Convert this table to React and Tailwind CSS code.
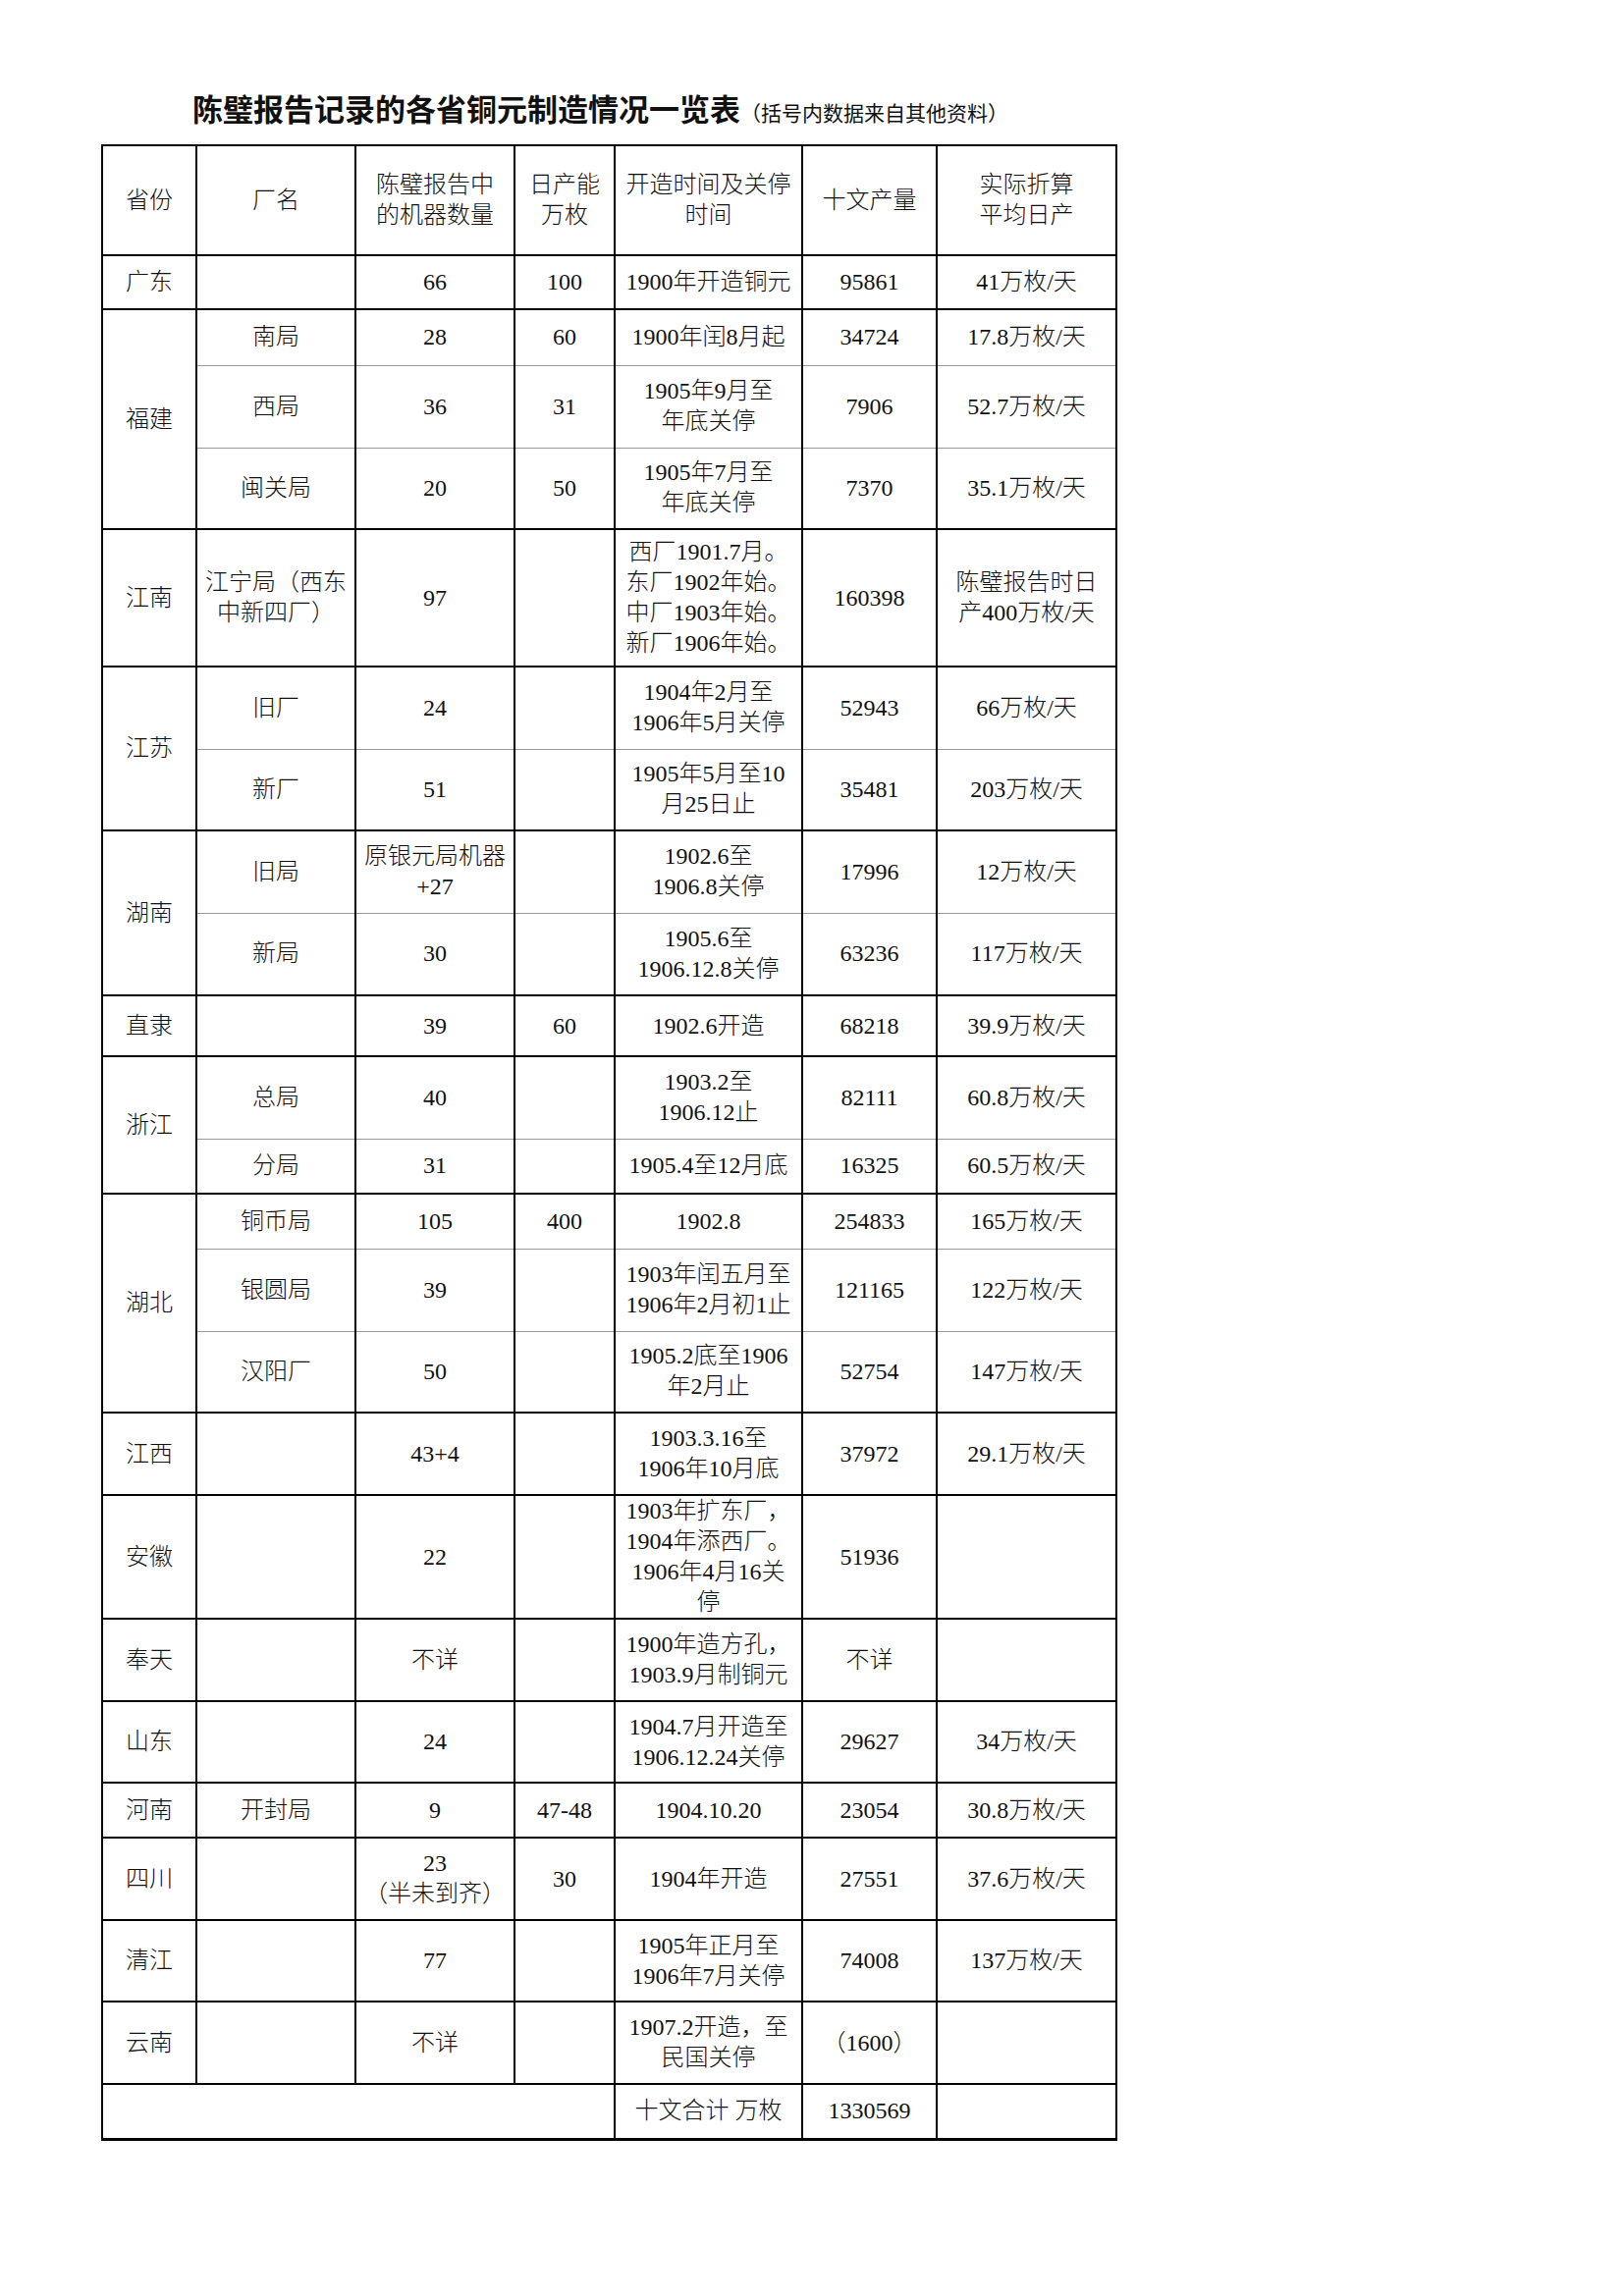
import React from "react";

const font = {
  fontFamily: '"Liberation Serif", "Noto Sans CJK SC", serif',
};

const header = ["省份", "厂名", "陈璧报告中\n的机器数量", "日产能\n万枚", "开造时间及关停\n时间", "十文产量", "实际折算\n平均日产"];

// each group: province, rows of [厂名, 机器, 日产能, 开造时间, 十文产量, 日产], row height
const groups = [
  { prov: "广东", rows: [{ h: 55, c: ["", "66", "100", "1900年开造铜元", "95861", "41万枚/天"] }] },
  {
    prov: "福建",
    rows: [
      { h: 57, c: ["南局", "28", "60", "1900年闰8月起", "34724", "17.8万枚/天"] },
      { h: 84, c: ["西局", "36", "31", "1905年9月至\n年底关停", "7906", "52.7万枚/天"] },
      { h: 83, c: ["闽关局", "20", "50", "1905年7月至\n年底关停", "7370", "35.1万枚/天"] },
    ],
  },
  {
    prov: "江南",
    rows: [
      {
        h: 140,
        c: [
          "江宁局（西东\n中新四厂）",
          "97",
          "",
          "西厂1901.7月。\n东厂1902年始。\n中厂1903年始。\n新厂1906年始。",
          "160398",
          "陈璧报告时日\n产400万枚/天",
        ],
      },
    ],
  },
  {
    prov: "江苏",
    rows: [
      { h: 84, c: ["旧厂", "24", "", "1904年2月至\n1906年5月关停", "52943", "66万枚/天"] },
      { h: 83, c: ["新厂", "51", "", "1905年5月至10\n月25日止", "35481", "203万枚/天"] },
    ],
  },
  {
    prov: "湖南",
    rows: [
      { h: 84, c: ["旧局", "原银元局机器\n+27", "", "1902.6至\n1906.8关停", "17996", "12万枚/天"] },
      { h: 84, c: ["新局", "30", "", "1905.6至\n1906.12.8关停", "63236", "117万枚/天"] },
    ],
  },
  { prov: "直隶", rows: [{ h: 62, c: ["", "39", "60", "1902.6开造", "68218", "39.9万枚/天"] }] },
  {
    prov: "浙江",
    rows: [
      { h: 84, c: ["总局", "40", "", "1903.2至\n1906.12止", "82111", "60.8万枚/天"] },
      { h: 56, c: ["分局", "31", "", "1905.4至12月底", "16325", "60.5万枚/天"] },
    ],
  },
  {
    prov: "湖北",
    rows: [
      { h: 56, c: ["铜币局", "105", "400", "1902.8", "254833", "165万枚/天"] },
      { h: 84, c: ["银圆局", "39", "", "1903年闰五月至\n1906年2月初1止", "121165", "122万枚/天"] },
      { h: 83, c: ["汉阳厂", "50", "", "1905.2底至1906\n年2月止", "52754", "147万枚/天"] },
    ],
  },
  { prov: "江西", rows: [{ h: 84, c: ["", "43+4", "", "1903.3.16至\n1906年10月底", "37972", "29.1万枚/天"] }] },
  {
    prov: "安徽",
    rows: [{ h: 126, c: ["", "22", "", "1903年扩东厂，\n1904年添西厂。\n1906年4月16关\n停", "51936", ""] }],
  },
  { prov: "奉天", rows: [{ h: 84, c: ["", "不详", "", "1900年造方孔，\n1903.9月制铜元", "不详", ""] }] },
  { prov: "山东", rows: [{ h: 83, c: ["", "24", "", "1904.7月开造至\n1906.12.24关停", "29627", "34万枚/天"] }] },
  { prov: "河南", rows: [{ h: 56, c: ["开封局", "9", "47-48", "1904.10.20", "23054", "30.8万枚/天"] }] },
  { prov: "四川", rows: [{ h: 84, c: ["", "23\n（半未到齐）", "30", "1904年开造", "27551", "37.6万枚/天"] }] },
  { prov: "清江", rows: [{ h: 83, c: ["", "77", "", "1905年正月至\n1906年7月关停", "74008", "137万枚/天"] }] },
  { prov: "云南", rows: [{ h: 84, c: ["", "不详", "", "1907.2开造，至\n民国关停", "（1600）", ""] }] },
];

function Lines({ text }) {
  return text.split("\n").map((l, i) => (
    <div key={i} className="whitespace-nowrap">
      {l}
    </div>
  ));
}

export default function App() {
  return (
    <div className="w-[1654px] h-[2339px] bg-white text-[#111]" style={font}>
      <div className="pt-[93px] pl-[196px] flex items-baseline h-[147px]">
        <span className="text-[31px] leading-[40px] font-bold">陈璧报告记录的各省铜元制造情况一览表</span>
        <span className="text-[21px] leading-[40px]">（括号内数据来自其他资料）</span>
      </div>
      <div className="pl-[103px]">
        <table className="table-fixed border-collapse border-2 border-b-[3px] border-black text-[24px] leading-[31px] font-light">
          <colgroup>
            <col className="w-[96px]" />
            <col className="w-[162px]" />
            <col className="w-[162px]" />
            <col className="w-[102px]" />
            <col className="w-[191px]" />
            <col className="w-[137px]" />
            <col className="w-[183px]" />
          </colgroup>
          <tbody>
            <tr>
              {header.map((h, i) => (
                <td key={i} className="h-[112px] p-0 text-center align-middle border-x-2 border-black">
                  <Lines text={h} />
                </td>
              ))}
            </tr>
            {groups.map((g) =>
              g.rows.map((r, ri) => (
                <tr key={g.prov + ri}>
                  {ri === 0 && (
                    <td
                      rowSpan={g.rows.length}
                      className="p-0 text-center align-middle border-x-2 border-t-2 border-black"
                    >
                      {g.prov}
                    </td>
                  )}
                  {r.c.map((c, ci) => (
                    <td
                      key={ci}
                      style={{ height: r.h }}
                      className={
                        ri === 0
                          ? "p-0 text-center align-middle border-x-2 border-x-black border-t-2 border-t-black"
                          : "p-0 text-center align-middle border-x-2 border-x-black border-t border-t-[#9a9a9a]"
                      }
                    >
                      <Lines text={c} />
                    </td>
                  ))}
                </tr>
              ))
            )}
            <tr>
              <td colSpan={4} className="h-[56px] p-0 border-x-2 border-t-2 border-black"></td>
              <td className="p-0 text-center align-middle border-x-2 border-t-2 border-black">十文合计 万枚</td>
              <td className="p-0 text-center align-middle border-x-2 border-t-2 border-black">1330569</td>
              <td className="p-0 border-x-2 border-t-2 border-black"></td>
            </tr>
          </tbody>
        </table>
      </div>
    </div>
  );
}
